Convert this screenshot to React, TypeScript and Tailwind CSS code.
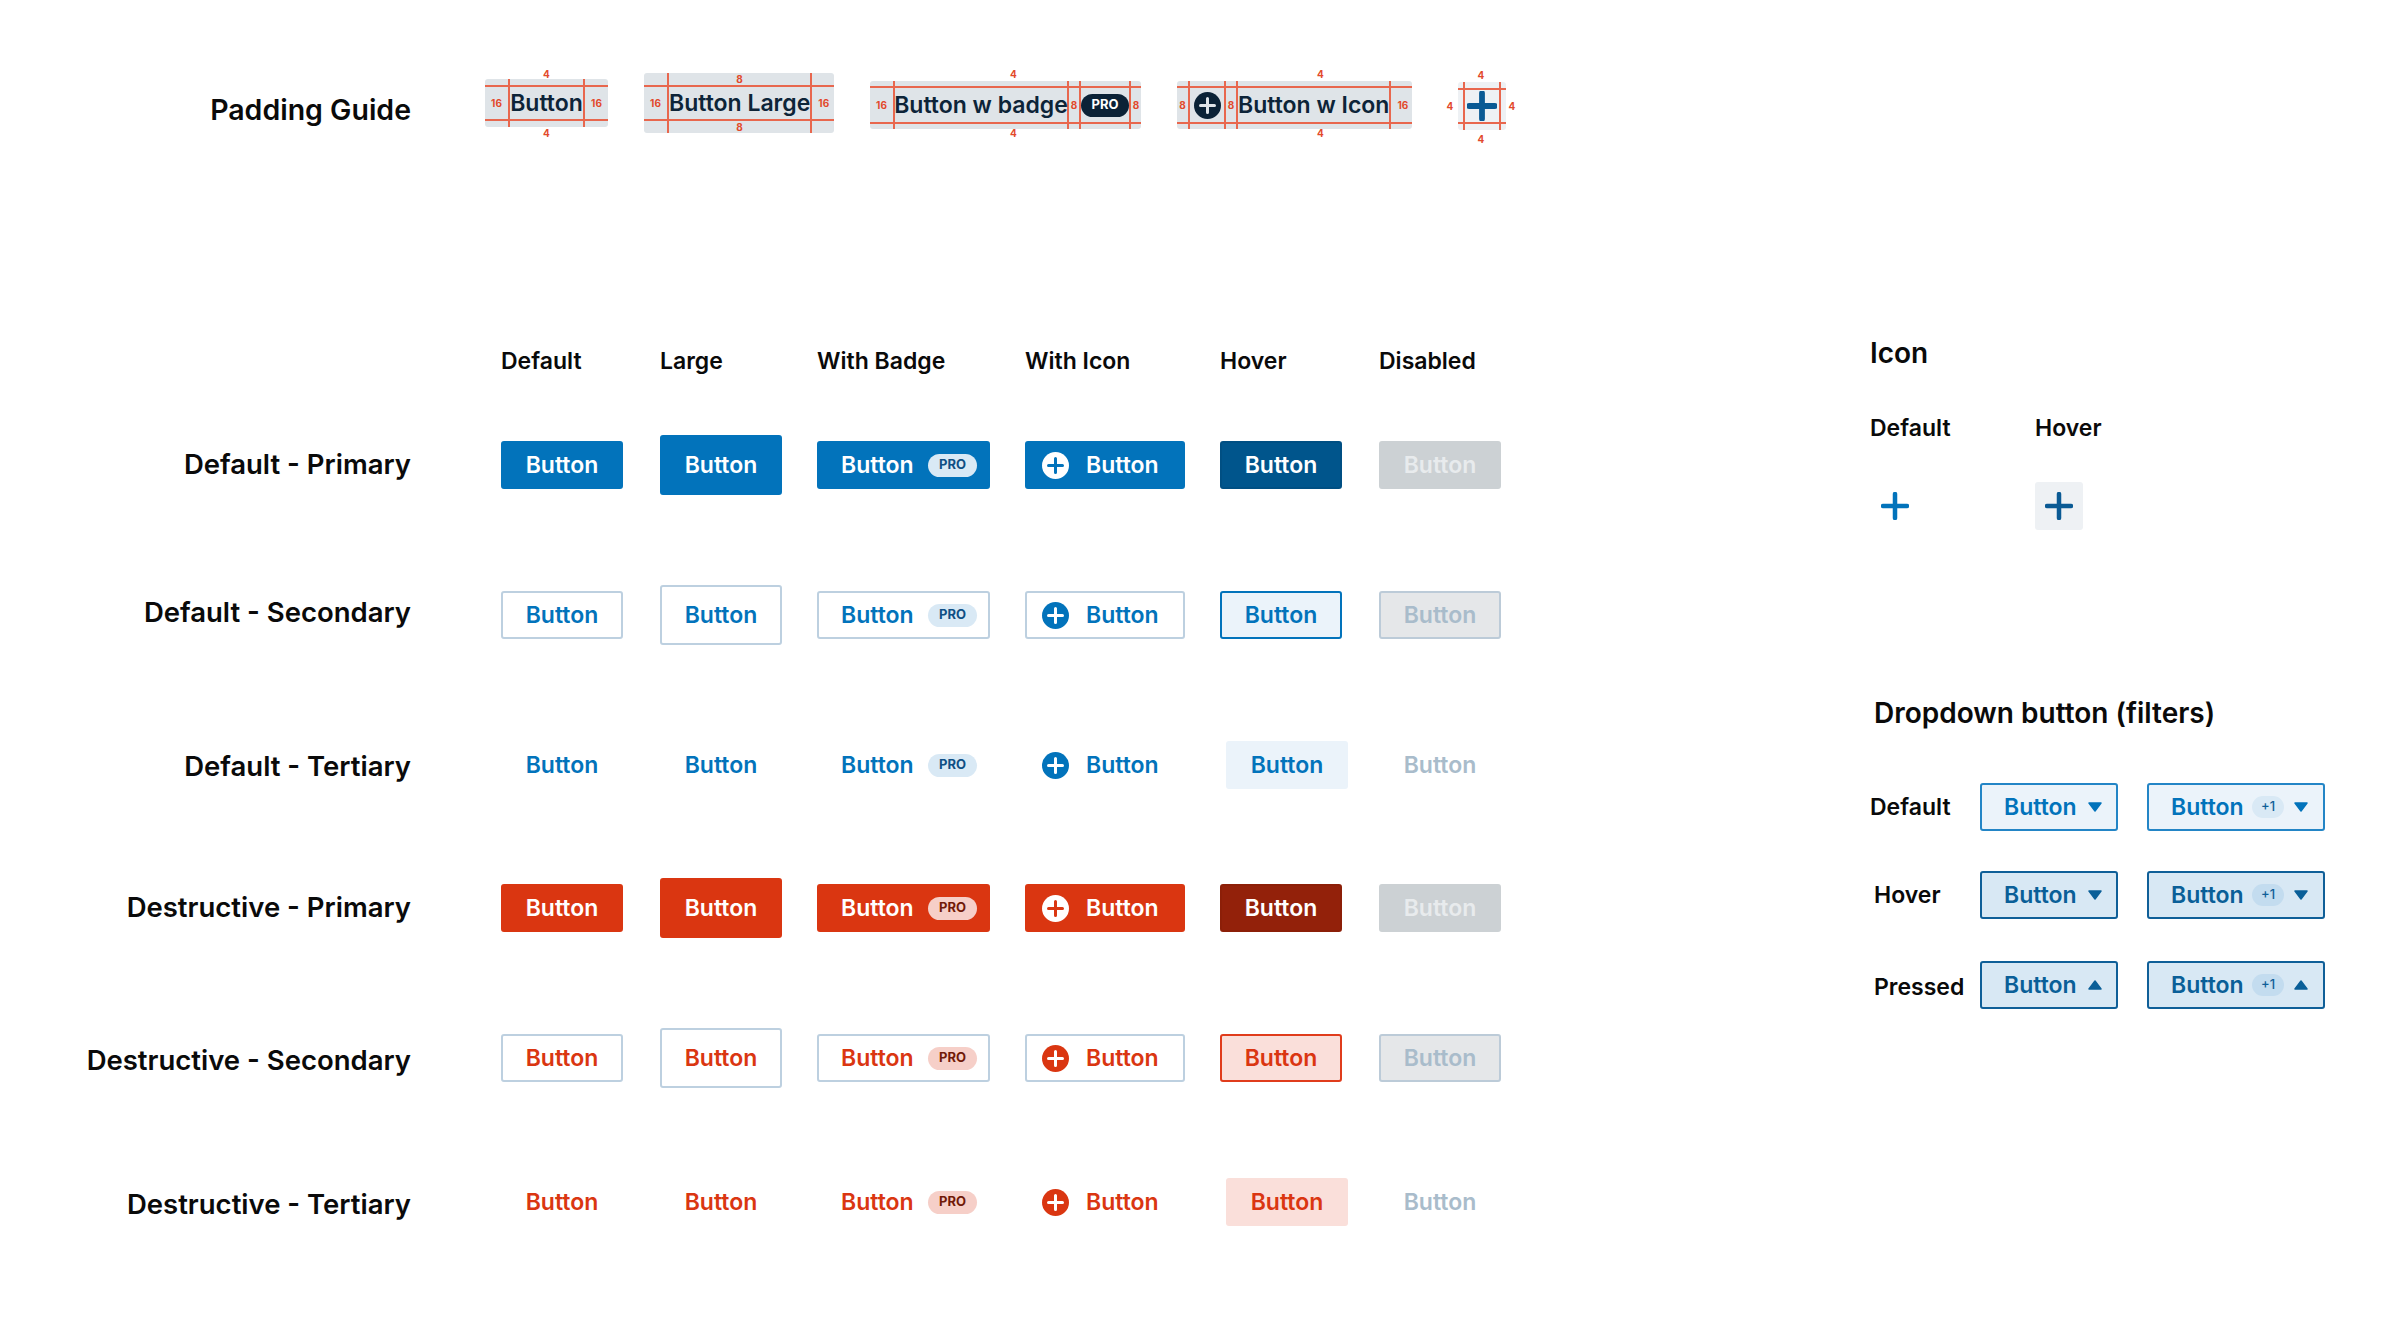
import React from "react";

const FONT = "font-['Inter','Liberation_Sans',sans-serif]";
const RED = "border-[#e8674e]";

const PlusCircle = ({ circle, plus }: { circle: string; plus: string }) => (
  <svg viewBox="0 0 27 27" className="w-[27px] h-[27px] shrink-0">
    <circle cx="13.5" cy="13.5" r="13.5" className={circle} />
    <path d="M13.5 6.5v14M6.5 13.5h14" strokeWidth="3" strokeLinecap="round" className={plus} />
  </svg>
);

const Plus = ({ stroke, size, weight = 4.5 }: { stroke: string; size: string; weight?: number }) => (
  <svg viewBox="0 0 28 28" className={`shrink-0 ${size}`}>
    <path d="M14 2v24M2 14h24" strokeWidth={weight} strokeLinecap="round" className={stroke} />
  </svg>
);

const Caret = ({ up, fill }: { up?: boolean; fill: string }) => (
  <svg viewBox="0 0 14 10" className="w-[14px] h-[10px] shrink-0">
    <path
      d={up ? "M1 9h12L7 1z" : "M1 1h12L7 9z"}
      strokeWidth="1.5"
      strokeLinejoin="round"
      className={fill}
    />
  </svg>
);

const Pro = ({ tone }: { tone: string }) => (
  <span className={`flex items-center justify-center w-[49px] h-[23px] rounded-full text-[13px] font-bold ${tone}`}>
    PRO
  </span>
);

const BASE = "flex items-center rounded-[3px] border-2 text-[23px] font-semibold h-12 whitespace-nowrap";

// one row of the table: six button states
const Row = ({
  label,
  labelClass,
  mt,
  text,
  shell,
  hover,
  disabled,
  badge,
  circle,
  plus,
}: {
  label: string;
  labelClass: string;
  mt: string;
  text: string;
  shell: string;
  hover: string;
  disabled: string;
  badge: string;
  circle: string;
  plus: string;
}) => (
  <div className={`flex items-center h-[60px] ${mt}`}>
    <div className={`w-[411px] mr-[90px] text-right text-[27.5px] font-semibold text-[#0a0a0a] whitespace-nowrap ${labelClass}`}>
      {label}
    </div>
    <div className="w-[159px]">
      <div className={`${BASE} justify-center w-[122px] ${shell} ${text}`}>Button</div>
    </div>
    <div className="w-[157px]">
      <div className={`${BASE} justify-center w-[122px] h-[60px] ${shell} ${text}`}>Button</div>
    </div>
    <div className="w-[208px]">
      <div className={`${BASE} w-[173px] pl-[22px] ${shell} ${text}`}>
        <span className="w-[87px]">Button</span>
        <Pro tone={badge} />
      </div>
    </div>
    <div className="w-[195px]">
      <div className={`${BASE} w-[160px] pl-[15px] gap-[17px] ${shell} ${text}`}>
        <PlusCircle circle={circle} plus={plus} />
        Button
      </div>
    </div>
    <div className="w-[159px]">
      <div className={`${BASE} justify-center w-[122px] ${hover}`}>Button</div>
    </div>
    <div className={`${BASE} justify-center w-[122px] ${disabled}`}>Button</div>
  </div>
);

// red measure marks of the padding guide
const Seg = ({ className, children }: { className: string; children?: React.ReactNode }) => (
  <div className={`flex items-center justify-center shrink-0 ${RED} text-[10px] font-bold text-[#e2492b] ${className}`}>
    {children}
  </div>
);
const Num = ({ className = "", children }: { className?: string; children: React.ReactNode }) => (
  <span className={`h-[12px] text-[10px] leading-[12px] font-bold text-[#e2492b] ${className}`}>{children}</span>
);
const Bands = ({ className }: { className: string }) => (
  <div className={`absolute inset-x-0 border-y-2 ${RED} ${className}`} />
);

const GUIDE = "relative flex items-stretch rounded-[3px] bg-[#dfe4e8] text-[23px] font-semibold text-[#0d2438] whitespace-nowrap";

const PaddingGuide = () => (
  <div className="flex items-start h-[77px] mt-[68px]">
    <div className="w-[411px] mr-[74px] mt-[25px] text-right text-[28.5px] leading-[34px] font-semibold text-[#0a0a0a]">
      Padding Guide
    </div>

    <div className="flex flex-col items-center mr-[36px]">
      <Num className="-mb-px">4</Num>
      <div className={`${GUIDE} w-[123px] h-12`}>
        <Seg className="w-[25px] border-r-2">16</Seg>
        <Seg className="flex-1 !text-[23px] !font-semibold !text-[#0d2438]">Button</Seg>
        <Seg className="w-[25px] border-l-2">16</Seg>
        <Bands className="top-[6px] bottom-[6px]" />
      </div>
      <Num>4</Num>
    </div>

    <div className={`${GUIDE} w-[190px] h-[60px] mt-[5px] mr-[36px]`}>
      <Seg className="w-[25px] border-r-2">16</Seg>
      <div className="flex flex-1 flex-col items-center justify-between">
        <Num>8</Num>
        <span className="leading-[30px]">Button Large</span>
        <Num>8</Num>
      </div>
      <Seg className="w-[25px] border-l-2">16</Seg>
      <Bands className="top-[12px] bottom-[12px]" />
    </div>

    <div className="flex flex-col items-center mr-[36px]">
      <Num className="mb-px ml-[16px]">4</Num>
      <div className={`${GUIDE} w-[271px] h-12`}>
        <Seg className="w-[25px] border-r-2">16</Seg>
        <div className={`flex items-center justify-center w-[174px] border-r-2 ${RED}`}>Button w badge</div>
        <Seg className="w-[12px] border-r-2">8</Seg>
        <Seg className="w-[50px] border-r-2">
          <Pro tone="bg-[#0b2236] text-white" />
        </Seg>
        <Seg className="w-[10px]">8</Seg>
        <Bands className="top-[5px] bottom-[5px]" />
      </div>
      <Num className="-mt-[2px] ml-[16px]">4</Num>
    </div>

    <div className="flex flex-col items-center mr-[32px]">
      <Num className="mb-px ml-[52px]">4</Num>
      <div className={`${GUIDE} w-[235px] h-12`}>
        <Seg className="w-[13px] border-r-2">8</Seg>
        <Seg className="w-[36px] border-r-2">
          <PlusCircle circle="fill-[#0b2236]" plus="stroke-[#dfe4e8]" />
        </Seg>
        <Seg className="w-[12px] border-r-2">8</Seg>
        <div className="flex flex-1 items-center">Button w Icon</div>
        <Seg className="w-[25px] border-l-2">16</Seg>
        <Bands className="top-[5px] bottom-[5px]" />
      </div>
      <Num className="-mt-[2px] ml-[52px]">4</Num>
    </div>

    <div className="flex flex-col items-center mt-px">
      <Num className="mb-px">4</Num>
      <div className="flex items-center">
        <Num className="w-[12px] mr-[2px] text-center">4</Num>
        <div className="relative flex items-stretch w-12 h-12 rounded-[3px] bg-[#eef1f4]">
          <Seg className="w-[7px] border-r-2" />
          <div className="flex flex-1 items-center justify-center">
            <Plus stroke="stroke-[#0a5a94]" size="w-[30px] h-[30px]" weight={5.4} />
          </div>
          <Seg className="w-[7px] border-l-2" />
          <Bands className="top-[6px] bottom-[6px]" />
        </div>
        <Num className="w-[12px] text-center">4</Num>
      </div>
      <Num className="mt-[3px]">4</Num>
    </div>
  </div>
);

const Table = () => (
  <div className="mt-[201px]">
    <div className="flex items-center h-[30px] text-[23px] font-semibold text-[#0a0a0a]">
      <div className="w-[501px]" />
      <div className="w-[159px]">Default</div>
      <div className="w-[157px]">Large</div>
      <div className="w-[208px]">With Badge</div>
      <div className="w-[195px]">With Icon</div>
      <div className="w-[159px]">Hover</div>
      <div>Disabled</div>
    </div>

    <Row
      label="Default - Primary"
      labelClass=""
      mt="mt-[59px]"
      text="text-white"
      shell="bg-[#0273bb] border-[#0273bb]"
      hover="bg-[#00558c] border-[#004f83] text-white"
      disabled="bg-[#ccd1d4] border-[#ccd1d4] text-[#e8ebed]"
      badge="bg-[#d9e9f5] text-[#0f4f84]"
      circle="fill-white"
      plus="stroke-[#0273bb]"
    />
    <Row
      label="Default - Secondary"
      labelClass="-mt-[4px]"
      mt="mt-[90px]"
      text="text-[#0273bb]"
      shell="bg-white border-[#bdd0e0]"
      hover="bg-[#ebf3fa] border-[#0273bb] text-[#0273bb]"
      disabled="bg-[#e5e7e9] border-[#bccbd8] text-[#a9bccb]"
      badge="bg-[#d9e9f5] text-[#0f4f84]"
      circle="fill-[#0273bb]"
      plus="stroke-white"
    />
    <Row
      label="Default - Tertiary"
      labelClass="mt-[4px]"
      mt="mt-[90px]"
      text="text-[#0273bb]"
      shell="border-transparent"
      hover="ml-[6px] bg-[#ebf3fa] border-transparent text-[#0273bb]"
      disabled="border-transparent text-[#a9bccb]"
      badge="bg-[#d9e9f5] text-[#0f4f84]"
      circle="fill-[#0273bb]"
      plus="stroke-white"
    />
    <Row
      label="Destructive - Primary"
      labelClass=""
      mt="mt-[83px]"
      text="text-white"
      shell="bg-[#da3611] border-[#da3611]"
      hover="bg-[#93210a] border-[#8c1f08] text-white"
      disabled="bg-[#ccd1d4] border-[#ccd1d4] text-[#e8ebed]"
      badge="bg-[#f6cfc8] text-[#701a08]"
      circle="fill-white"
      plus="stroke-[#da3611]"
    />
    <Row
      label="Destructive - Secondary"
      labelClass="mt-[5px]"
      mt="mt-[90px]"
      text="text-[#da3611]"
      shell="bg-white border-[#bdd0e0]"
      hover="bg-[#fadfda] border-[#e03c1c] text-[#da3611]"
      disabled="bg-[#e5e7e9] border-[#bccbd8] text-[#a9bccb]"
      badge="bg-[#f6cfc8] text-[#701a08]"
      circle="fill-[#da3611]"
      plus="stroke-white"
    />
    <Row
      label="Destructive - Tertiary"
      labelClass="mt-[5px]"
      mt="mt-[84px]"
      text="text-[#da3611]"
      shell="border-transparent"
      hover="ml-[6px] bg-[#fadfda] border-transparent text-[#da3611]"
      disabled="border-transparent text-[#a9bccb]"
      badge="bg-[#f6cfc8] text-[#701a08]"
      circle="fill-[#da3611]"
      plus="stroke-white"
    />
  </div>
);

const DROP = "flex items-center h-12 rounded-[3px] border-2 text-[23px] font-semibold whitespace-nowrap pl-[22px]";

const DropRow = ({
  label,
  labelClass,
  mt,
  shell,
  caret,
  pill,
  up,
}: {
  label: string;
  labelClass: string;
  mt: string;
  shell: string;
  caret: string;
  pill: string;
  up?: boolean;
}) => (
  <div className={`flex items-center ${mt}`}>
    <div className={`w-[110px] text-[23px] font-semibold text-[#0a0a0a] ${labelClass}`}>{label}</div>
    <div className={`${DROP} w-[138px] ${shell}`}>
      <span className="w-[84px]">Button</span>
      <Caret up={up} fill={caret} />
    </div>
    <div className={`${DROP} w-[178px] ml-[29px] ${shell}`}>
      <span className="w-[81px]">Button</span>
      <span className={`flex items-center justify-center w-[32px] h-[22px] rounded-full text-[13px] font-medium ${pill}`}>+1</span>
      <span className="ml-[10px]">
        <Caret up={up} fill={caret} />
      </span>
    </div>
  </div>
);

const Side = () => (
  <div className="pt-[336px]">
    <div className="h-[34px] text-[28px] leading-[34px] font-semibold text-[#0a0a0a]">Icon</div>
    <div className="flex mt-[43px] h-[30px] text-[23px] leading-[30px] font-semibold text-[#0a0a0a]">
      <div className="w-[165px]">Default</div>
      <div>Hover</div>
    </div>
    <div className="flex items-center mt-[39px]">
      <div className="w-[165px] pl-[11px]">
        <Plus stroke="stroke-[#0273bb]" size="w-[28px] h-[28px]" />
      </div>
      <div className="flex items-center justify-center w-12 h-12 rounded-[3px] bg-[#eef1f4]">
        <Plus stroke="stroke-[#0a5a94]" size="w-[28px] h-[28px]" />
      </div>
    </div>

    <div className="mt-[166px] ml-[4px] h-[34px] text-[28px] leading-[34px] font-semibold text-[#0a0a0a]">
      Dropdown button (filters)
    </div>
    <DropRow
      label="Default"
      labelClass="mt-px"
      mt="mt-[53px]"
      shell="bg-[#ebf3fa] border-[#2385c6] text-[#0273bb]"
      caret="fill-[#0273bb] stroke-[#0273bb]"
      pill="bg-[#d9e9f5] text-[#0f5f98]"
    />
    <DropRow
      label="Hover"
      labelClass="pl-[4px]"
      mt="mt-[40px]"
      shell="bg-[#d8e8f4] border-[#0f5f98] text-[#0a5f98]"
      caret="fill-[#0a5f98] stroke-[#0a5f98]"
      pill="bg-[#c3dcef] text-[#0f5f98]"
    />
    <DropRow
      label="Pressed"
      labelClass="pl-[4px] mt-[4px]"
      mt="mt-[42px]"
      shell="bg-[#d8e8f4] border-[#0f5f98] text-[#0a5f98]"
      caret="fill-[#0a5f98] stroke-[#0a5f98]"
      pill="bg-[#c3dcef] text-[#0f5f98]"
      up
    />
  </div>
);

export default function App() {
  return (
    <div className={`flex w-[2400px] h-[1337px] overflow-hidden bg-white ${FONT}`}>
      <div className="w-[1870px] shrink-0">
        <PaddingGuide />
        <Table />
      </div>
      <Side />
    </div>
  );
}
